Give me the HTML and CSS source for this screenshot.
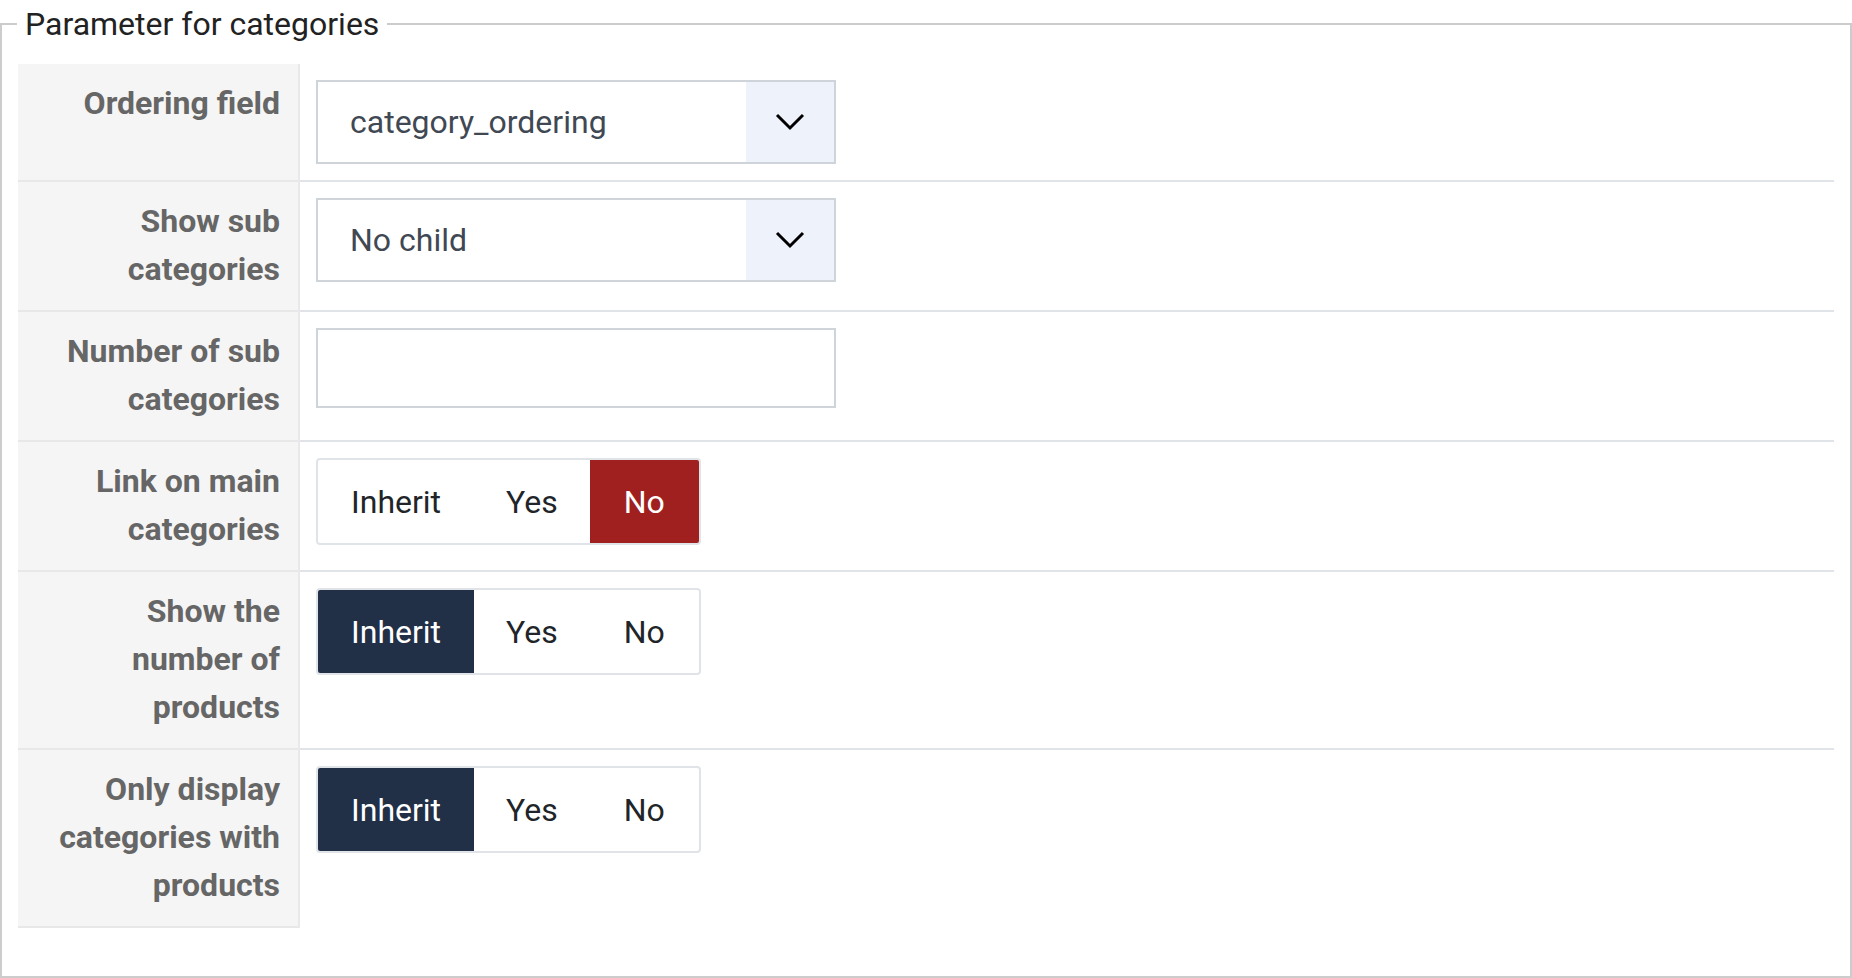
FILE: index.html
```html
<!DOCTYPE html>
<html>
<head>
<meta charset="utf-8">
<title>Parameter for categories</title>
<link rel="stylesheet" href="styles.css">
</head>
<body>
<fieldset class="params">
  <legend>Parameter for categories</legend>

  <div class="rows">
    <div class="row">
      <div class="label">Ordering field</div>
      <div class="field">
        <div class="select">
          <span class="select-value">category_ordering</span>
          <span class="select-btn">
            <svg width="30" height="18" viewBox="0 0 30 18"><path d="M2 2 L15 15 L28 2" fill="none" stroke="#000" stroke-width="3"/></svg>
          </span>
        </div>
      </div>
    </div>

    <div class="row">
      <div class="label">Show sub categories</div>
      <div class="field">
        <div class="select">
          <span class="select-value">No child</span>
          <span class="select-btn">
            <svg width="30" height="18" viewBox="0 0 30 18"><path d="M2 2 L15 15 L28 2" fill="none" stroke="#000" stroke-width="3"/></svg>
          </span>
        </div>
      </div>
    </div>

    <div class="row">
      <div class="label">Number of sub categories</div>
      <div class="field">
        <div class="input"></div>
      </div>
    </div>

    <div class="row">
      <div class="label">Link on main categories</div>
      <div class="field">
        <div class="toggle">
          <span class="opt">Inherit</span>
          <span class="opt">Yes</span>
          <span class="opt no-on">No</span>
        </div>
      </div>
    </div>

    <div class="row">
      <div class="label">Show the number of products</div>
      <div class="field">
        <div class="toggle">
          <span class="opt inherit-on">Inherit</span>
          <span class="opt">Yes</span>
          <span class="opt">No</span>
        </div>
      </div>
    </div>

    <div class="row">
      <div class="label">Only display categories with products</div>
      <div class="field">
        <div class="toggle">
          <span class="opt inherit-on">Inherit</span>
          <span class="opt">Yes</span>
          <span class="opt">No</span>
        </div>
      </div>
    </div>
  </div>
</fieldset>
</body>
</html>
```

FILE: styles.css
```css
html, body {
  margin: 0;
  background: #fff;
}

body {
  font-family: Roboto, "Liberation Sans", Arial, sans-serif;
  font-size: 32px;
  line-height: 1.5;
}

.params {
  margin: 0;
  min-width: 0;
  padding: 0 16px 48px;
  border: 2px solid #cccccc;
}

.params legend {
  padding: 0 8px;
  margin-left: -1px;
  color: #222;
  font-size: 32px;
  line-height: 48px;
}

.rows {
  margin-top: 16px;
}

.row {
  display: grid;
  grid-template-columns: 282px 1fr;
}

.label {
  box-sizing: border-box;
  padding: 15px 18px 17px 24px;
  background: #f5f5f5;
  border-right: 2px solid #e9e9e9;
  color: #666;
  font-weight: 700;
  text-align: right;
}

.field {
  padding: 16px;
}

.row + .row .label {
  border-top: 2px solid #e8e8e8;
}

.row + .row .field {
  border-top: 2px solid #e0e3e7;
}

.row:last-child .label {
  border-bottom: 2px solid #e8e8e8;
}

.select {
  box-sizing: border-box;
  display: flex;
  width: 520px;
  height: 84px;
  border: 2px solid #cfd4da;
  background: #fff;
}

.select-value {
  flex: 1;
  display: flex;
  align-items: center;
  padding-left: 32px;
  color: #404854;
}

.select-btn {
  width: 88px;
  display: flex;
  align-items: center;
  justify-content: center;
  background: #eef3fb;
}

.input {
  box-sizing: border-box;
  width: 520px;
  height: 80px;
  border: 2px solid #cfd4da;
  background: #fff;
}

.toggle {
  box-sizing: border-box;
  display: inline-flex;
  height: 87px;
  border: 2px solid #e0e4e8;
  border-radius: 4px;
  overflow: hidden;
  background: #fff;
}

.opt {
  display: flex;
  align-items: center;
  padding: 0 33px;
  color: #212529;
}

.opt + .opt {
  padding: 0 32px;
}

.opt:last-child {
  padding: 0 34px;
}

.opt.inherit-on {
  background: #212f47;
  color: #fff;
}

.opt.no-on {
  background: #a01f1f;
  color: #fff;
}
```
